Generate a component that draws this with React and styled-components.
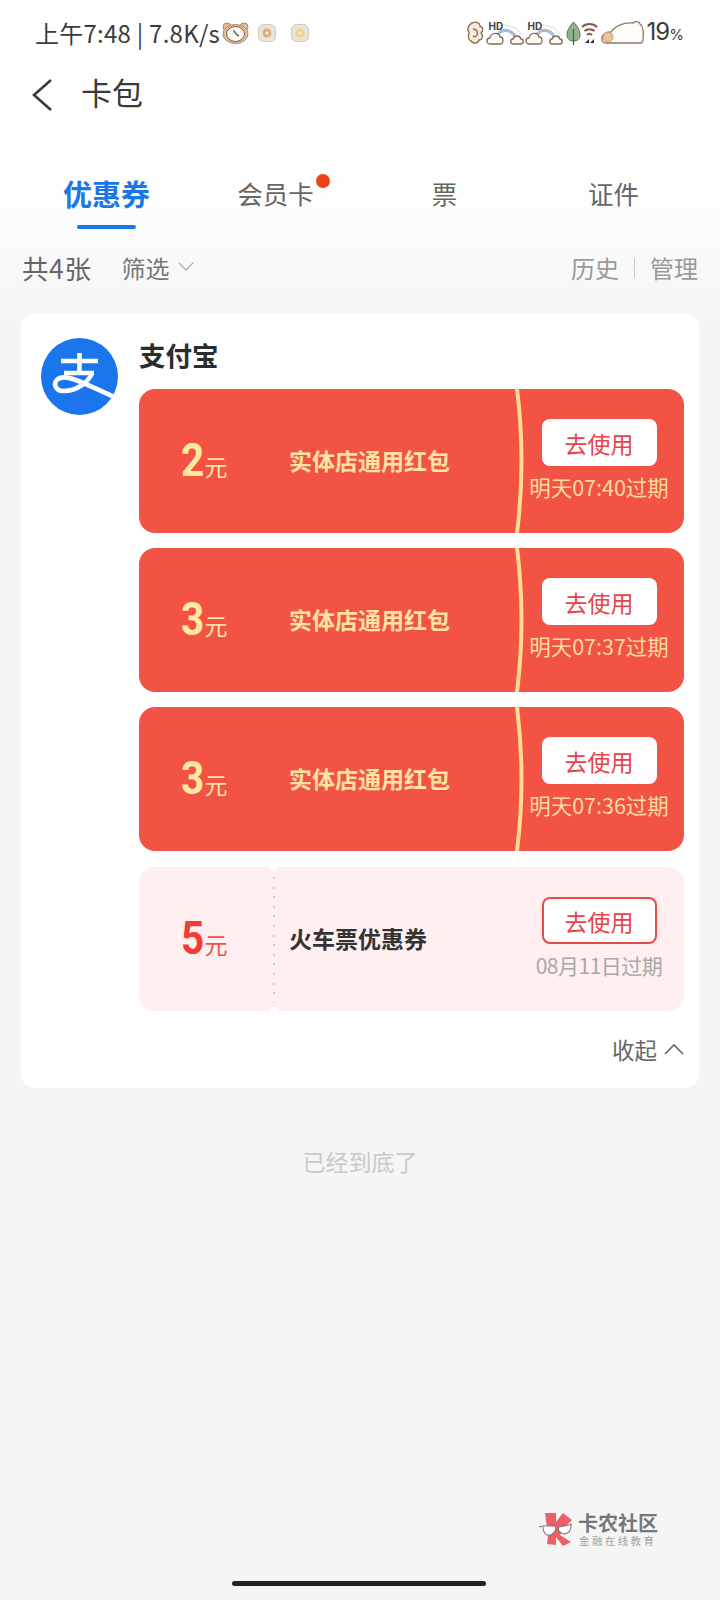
import React from 'react';
import styled, { createGlobalStyle } from 'styled-components';

const GlobalStyle = createGlobalStyle`
  html, body {
    margin: 0;
    padding: 0;
    background: #f5f5f6;
  }
  * {
    box-sizing: border-box;
  }
`;

const Page = styled.div`
  position: relative;
  width: 720px;
  height: 1600px;
  overflow: hidden;
  font-family: "Noto Sans CJK SC", sans-serif;
  background: linear-gradient(#ffffff 0, #ffffff 170px, #f5f5f6 330px);
`;

const StatusBar = styled.div`
  height: 66px;
  padding: 0 36px 0 35px;
  display: flex;
  align-items: center;
  justify-content: space-between;
  color: #3c3c3c;
`;

const StatusGroup = styled.div`
  display: flex;
  align-items: center;
`;

const Gap = styled.span`
  flex: none;
  width: ${ props => props.size }px;
`;

const StatusText = styled.span`
  font-size: 24px;
  line-height: 32px;
  letter-spacing: 0.25px;
  white-space: nowrap;
`;

const Battery = styled.span`
  font-family: Inter, sans-serif;
  font-size: 24px;
  line-height: 32px;
  letter-spacing: -1px;

  small {
    font-size: 15px;
    letter-spacing: 0;
  }
`;

const NavBar = styled.div`
  height: 58px;
  padding-left: 30px;
  display: flex;
  align-items: center;
  color: #3a3a3a;
`;

const NavTitle = styled.h1`
  margin: 0 0 6px 29px;
  font-size: 31px;
  font-weight: 400;
  line-height: 40px;
`;

const Tabs = styled.div`
  margin-top: 36px;
  padding: 0 22px;
  height: 69px;
  display: grid;
  grid-template-columns: repeat(4, 1fr);
`;

const Tab = styled.div`
  position: relative;
  display: flex;
  justify-content: center;
  padding-top: 13px;
  color: ${ props => props.active ? '#1b76e8' : '#666666' };
  font-size: ${ props => props.active ? '29px' : '25.5px' };
  font-weight: ${ props => props.active ? 700 : 400 };
  line-height: 40px;
`;

const TabLabel = styled.span`
  position: relative;
`;

const RedDot = styled.i`
  position: absolute;
  top: 1px;
  right: -16px;
  width: 14px;
  height: 14px;
  border-radius: 50%;
  background: #f0401a;
`;

const Underline = styled.i`
  position: absolute;
  left: 50%;
  bottom: 0;
  width: 59px;
  height: 4px;
  margin-left: -30px;
  border-radius: 2px;
  background: #1b76e8;
`;

const FilterBar = styled.div`
  height: 84px;
  padding: 0 22px 8px 22px;
  display: flex;
  align-items: center;
`;

const CountText = styled.span`
  font-size: 26.5px;
  letter-spacing: 0.6px;
  color: #666666;
`;

const FilterText = styled.span`
  margin-left: 30px;
  margin-right: 8px;
  font-size: 24px;
  color: #777777;
`;

const FilterActions = styled.div`
  margin-left: auto;
  display: flex;
  align-items: center;
  font-size: 24px;
  color: #9a9a9a;
`;

const Separator = styled.i`
  width: 1px;
  height: 20px;
  margin: 2px 15px 0 15px;
  background: #c9c9c9;
`;

const Card = styled.section`
  margin: 0 21px;
  height: 775px;
  padding: 25px 15px 0 20px;
  border-radius: 14px;
  background: #ffffff;
  display: grid;
  grid-template-columns: 77px 1fr;
  column-gap: 21px;
`;

const Brand = styled.h2`
  margin: -2px 0 0;
  height: 53px;
  font-size: 26.5px;
  font-weight: 700;
  line-height: 38px;
  color: #2c2c2c;
`;

const Coupons = styled.div`
  display: flex;
  flex-direction: column;
  gap: 15px;
`;

const Coupon = styled.div`
  position: relative;
  height: 144px;
  margin-top: ${ props => props.pale ? '1px' : '0' };
  border-radius: 16px;
  display: flex;
  align-items: center;
  background: ${ props => props.pale ? '#ffeff0' : '#f35345' };
`;

const Amount = styled.div`
  width: 150px;
  padding: 0 0 2px 42px;
  display: flex;
  align-items: baseline;
  color: ${ props => props.pale ? '#f43c35' : '#ffe99f' };
`;

const AmountValue = styled.span`
  font-family: Roboto, sans-serif;
  font-size: 46px;
  font-weight: 700;
  line-height: 50px;
  transform: scaleX(0.88);
  transform-origin: left center;
`;

const AmountUnit = styled.span`
  margin-left: -3px;
  font-size: 23px;
  font-weight: 400;
  color: ${ props => props.pale ? '#f0504a' : '#ffe3a8' };
`;

const CouponName = styled.div`
  margin-bottom: 2px;
  font-size: 23px;
  font-weight: 700;
  line-height: 32px;
  color: ${ props => props.pale ? '#333333' : '#ffe3a0' };
`;

const CouponSide = styled.div`
  margin-left: auto;
  width: 165px;
  padding: 0 5px 1px 0;
  display: flex;
  flex-direction: column;
  align-items: center;
`;

const UseButton = styled.button`
  width: 115px;
  height: 47px;
  padding: 0;
  border: ${ props => props.pale ? '2px solid #e84a48' : 'none' };
  border-radius: 8px;
  background: #ffffff;
  color: #e8434a;
  font-family: inherit;
  font-size: 23px;
`;

const Expiry = styled.div`
  margin-top: 6px;
  font-size: ${ props => props.pale ? '21px' : '21.5px' };
  line-height: 30px;
  letter-spacing: ${ props => props.pale ? '-0.5px' : '0' };
  white-space: nowrap;
  color: ${ props => props.pale ? '#a8a8a8' : '#ffdca0' };
`;

const Arc = styled.svg`
  position: absolute;
  top: 0;
  left: 376px;
  width: 14px;
  height: 144px;
`;

const Perforation = styled.i`
  position: absolute;
  top: 0;
  bottom: 0;
  left: 134px;
  width: 2px;
  background: repeating-linear-gradient(#dcc8ce 0, #dcc8ce 2px, transparent 2px, transparent 9.6px) 0 10px / 2px 126px no-repeat;

  &:before, &:after {
    content: "";
    position: absolute;
    left: -3px;
    width: 8px;
    height: 8px;
    border-radius: 50%;
    background: #ffffff;
  }

  &:before {
    top: -4px;
  }

  &:after {
    bottom: -4px;
  }
`;

const Collapse = styled.div`
  height: 66px;
  padding: 9px 0 0;
  display: flex;
  align-items: center;
  justify-content: flex-end;
  gap: 7px;
  font-size: 22.5px;
  color: #666666;
`;

const EndText = styled.div`
  margin-top: 57px;
  text-align: center;
  font-size: 23px;
  line-height: 32px;
  color: #c9c9c9;
`;

const Watermark = styled.div`
  position: absolute;
  left: 539px;
  top: 1512px;
  display: flex;
  align-items: center;
  gap: 5px;
`;

const WatermarkText = styled.div`
  display: flex;
  flex-direction: column;
`;

const WatermarkTitle = styled.span`
  font-size: 20px;
  font-weight: 700;
  line-height: 22px;
  color: #77777a;
`;

const WatermarkSub = styled.span`
  margin-left: 1px;
  font-size: 10.5px;
  line-height: 14px;
  letter-spacing: 2.4px;
  white-space: nowrap;
  color: #a2a2a2;
`;

const HomeBar = styled.i`
  position: absolute;
  left: 232px;
  top: 1581px;
  width: 254px;
  height: 5px;
  border-radius: 3px;
  background: #222222;
`;

const HdLabel = styled.span`
  position: absolute;
  left: 3px;
  top: -1px;
  font-family: Inter, sans-serif;
  font-size: 10px;
  font-weight: 700;
  line-height: 12px;
  color: #444444;
`;

const HdIcon = styled.span`
  position: relative;
  display: block;
  width: 38px;
  height: 24px;
`;

const Chevron = ({ up, size = 16, color = '#b0b0b0' }) => (
  <svg width={ size } height={ size * 0.6 } viewBox="0 0 20 12" fill="none" stroke={ color } strokeWidth="1.6">
    <path d={ up ? 'M1 11 L10 2 L19 11' : 'M1 1 L10 10 L19 1' } />
  </svg>
);

const BearClock = () => (
  <svg width="27" height="22" viewBox="0 0 27 22">
    <circle cx="5" cy="5" r="4" fill="#e7bd97" stroke="#a98a6c" />
    <circle cx="22" cy="5" r="4" fill="#e7bd97" stroke="#a98a6c" />
    <ellipse cx="13.5" cy="12" rx="12.5" ry="9.5" fill="#e7bd97" stroke="#a98a6c" />
    <ellipse cx="13.5" cy="12" rx="9" ry="7.5" fill="#fbf8f0" stroke="#6e6258" />
    <path d="M11.5 8.5 L15 13 L17 14" stroke="#55606e" strokeWidth="1.4" fill="none" />
  </svg>
);

const Tile = ({ inner }) => (
  <svg width="18" height="18" viewBox="0 0 18 18">
    <rect x="0.5" y="0.5" width="17" height="17" rx="5" fill="#ece3d7" stroke="#d5cbbb" />
    <circle cx="9" cy="9" r="4.5" fill={ inner } />
    <circle cx="9" cy="9" r="1.6" fill="#f7ecd4" />
  </svg>
);

const Ear = () => (
  <svg width="18" height="24" viewBox="0 0 18 24">
    <path d="M5 2 C9 0 13 2 13 5 C17 7 16 10 14 12 C17 15 15 19 12 19 C11 23 6 23 4 20 C1 19 1 15 2 12 C0 8 1 4 5 2 Z" fill="#f7ead9" stroke="#8a6f58" strokeWidth="1.4" />
    <path d="M6 8 C10 8 11 11 10 14 C9 16 7 16 6 15" fill="none" stroke="#8a6f58" strokeWidth="1.4" />
  </svg>
);

const CloudRainbow = () => (
  <HdIcon>
    <svg width="38" height="24" viewBox="0 0 38 24" style={{ display: 'block' }}>
      <path d="M17 4 C25 4 32 8 36 14" fill="none" stroke="#e6dfe0" strokeWidth="1.2" />
      <path d="M11 15 C15 8 23 7 29 15" fill="none" stroke="#a9bcd4" strokeWidth="3.2" />
      <path d="M4 23 C0 23 0 17 4 17 C5 11 13 11 14 16 C18 16 18 23 14 23 Z" fill="#fdf8f0" stroke="#7a6e62" strokeWidth="1.3" />
      <path d="M27 23 C24 23 24 18 27 18 C28 14 34 14 35 18 C38 18 38 23 35 23 Z" fill="#fdf8f0" stroke="#7a6e62" strokeWidth="1.3" />
    </svg>
    <HdLabel>HD</HdLabel>
  </HdIcon>
);

const Leaf = () => (
  <svg width="15" height="24" viewBox="0 0 15 24">
    <path d="M7.5 1 C12 6 14 10 14 14 C14 18 11 20 7.5 20 C4 20 1 18 1 14 C1 10 3 6 7.5 1 Z" fill="#8fb48c" stroke="#5a6e58" />
    <path d="M7.5 8 V24" stroke="#4c5c4a" strokeWidth="1.2" />
  </svg>
);

const Wifi = () => (
  <svg width="17" height="24" viewBox="0 0 17 24" fill="none" stroke="#84594c" strokeWidth="2">
    <path d="M1 6 C5 2 12 2 16 6" />
    <path d="M3.5 10 C6 7.5 11 7.5 13.5 10" />
    <path d="M6 14 C7.5 12.5 9.5 12.5 11 14" />
    <path d="M4 22 L8 18 V22 Z M9 22 L13 18 V22 Z" fill="#2c2c2c" stroke="none" />
  </svg>
);

const SleepingBear = () => (
  <svg width="46" height="24" viewBox="0 0 46 24">
    <path d="M2 18 C1 14 6 11 11 11 C15 5 24 1 33 2 C35 0 39 0 40 3 C43 5 44 12 43 19 C43 21 42 22 40 22 L6 22 C3 22 2 20 2 18 Z" fill="#fffdf8" stroke="#8a7a68" strokeWidth="1.3" />
    <ellipse cx="8" cy="16" rx="5" ry="5" fill="#edc49c" stroke="#a98a6c" strokeWidth="0.8" />
  </svg>
);

const BackArrow = () => (
  <svg width="22" height="34" viewBox="0 0 22 34" fill="none" stroke="#3a3a3a" strokeWidth="2.6">
    <path d="M21 2 L4 17 L21 32" />
  </svg>
);

const AlipayLogo = () => (
  <svg width="77" height="77" viewBox="0 0 77 77">
    <defs>
      <clipPath id="alipay-disc">
        <circle cx="38.5" cy="38.5" r="38.5" />
      </clipPath>
    </defs>
    <circle cx="38.5" cy="38.5" r="38.5" fill="#1b76ee" />
    <g fill="none" stroke="#ffffff" strokeWidth="4.6" clipPath="url(#alipay-disc)">
      <path d="M20 23 H57" />
      <path d="M38.5 15 V35" />
      <path d="M23 35 H53" />
      <path d="M51 35 C47 45 35 53 23 53 C13 53 11 43 19 40 C28 37 40 44 80 62" />
    </g>
  </svg>
);

const KanongLogo = () => (
  <svg width="34" height="36" viewBox="0 0 34 36">
    <path d="M6 1 H17 V10 L24 1 L33 8 L26 15 L21 23 L32 30 L24 34 L17 25 V33 L8 32 L9 23 Z" fill="#ec5f68" />
    <path d="M0 15 L4 14 H16 L17 16 C16 21 12 24 9 23 C6 23 4 19 4 15 M33 12 L30 13 L20 15 L19 17 C20 21 25 23 28 21 C31 20 32 16 32 13" fill="#ffffff" stroke="#7a7a7a" strokeWidth="1.1" />
  </svg>
);

const coupons = [
  { amount: '2', name: '实体店通用红包', expiry: '明天07:40过期' },
  { amount: '3', name: '实体店通用红包', expiry: '明天07:37过期' },
  { amount: '3', name: '实体店通用红包', expiry: '明天07:36过期' },
  { amount: '5', name: '火车票优惠券', expiry: '08月11日过期', pale: true },
];

export default function App() {
  return (
    <Page>
      <GlobalStyle />
      <StatusBar>
        <StatusGroup>
          <StatusText>上午7:48 | 7.8K/s</StatusText>
          <Gap size={ 2 } />
          <BearClock />
          <Gap size={ 9 } />
          <Tile inner="#dcae84" />
          <Gap size={ 15 } />
          <Tile inner="#eed58e" />
        </StatusGroup>
        <StatusGroup>
          <Ear />
          <Gap size={ 1 } />
          <CloudRainbow />
          <Gap size={ 1 } />
          <CloudRainbow />
          <Gap size={ 3 } />
          <Leaf />
          <Wifi />
          <Gap size={ 2 } />
          <SleepingBear />
          <Gap size={ 1 } />
          <Battery>19<small>%</small></Battery>
        </StatusGroup>
      </StatusBar>

      <NavBar>
        <BackArrow />
        <NavTitle>卡包</NavTitle>
      </NavBar>

      <Tabs>
        <Tab active>
          <TabLabel>优惠券</TabLabel>
          <Underline />
        </Tab>
        <Tab>
          <TabLabel>会员卡<RedDot /></TabLabel>
        </Tab>
        <Tab><TabLabel>票</TabLabel></Tab>
        <Tab><TabLabel>证件</TabLabel></Tab>
      </Tabs>

      <FilterBar>
        <CountText>共4张</CountText>
        <FilterText>筛选</FilterText>
        <Chevron />
        <FilterActions>
          历史
          <Separator />
          管理
        </FilterActions>
      </FilterBar>

      <Card>
        <AlipayLogo />
        <div>
          <Brand>支付宝</Brand>
          <Coupons>
            { coupons.map( ( coupon, index ) => (
              <Coupon key={ index } pale={ coupon.pale }>
                <Amount pale={ coupon.pale }>
                  <AmountValue>{ coupon.amount }</AmountValue>
                  <AmountUnit pale={ coupon.pale }>元</AmountUnit>
                </Amount>
                <CouponName pale={ coupon.pale }>{ coupon.name }</CouponName>
                <CouponSide>
                  <UseButton pale={ coupon.pale }>去使用</UseButton>
                  <Expiry pale={ coupon.pale }>{ coupon.expiry }</Expiry>
                </CouponSide>
                { coupon.pale ? (
                  <Perforation />
                ) : (
                  <Arc viewBox="0 0 14 144" fill="none">
                    <path d="M2 0 Q11 72 2 144" stroke="#ffdc92" strokeWidth="4" />
                  </Arc>
                ) }
              </Coupon>
            ) ) }
          </Coupons>
          <Collapse>
            收起
            <Chevron up size={ 20 } color="#666666" />
          </Collapse>
        </div>
      </Card>

      <EndText>已经到底了</EndText>

      <Watermark>
        <KanongLogo />
        <WatermarkText>
          <WatermarkTitle>卡农社区</WatermarkTitle>
          <WatermarkSub>金融在线教育</WatermarkSub>
        </WatermarkText>
      </Watermark>

      <HomeBar />
    </Page>
  );
}
